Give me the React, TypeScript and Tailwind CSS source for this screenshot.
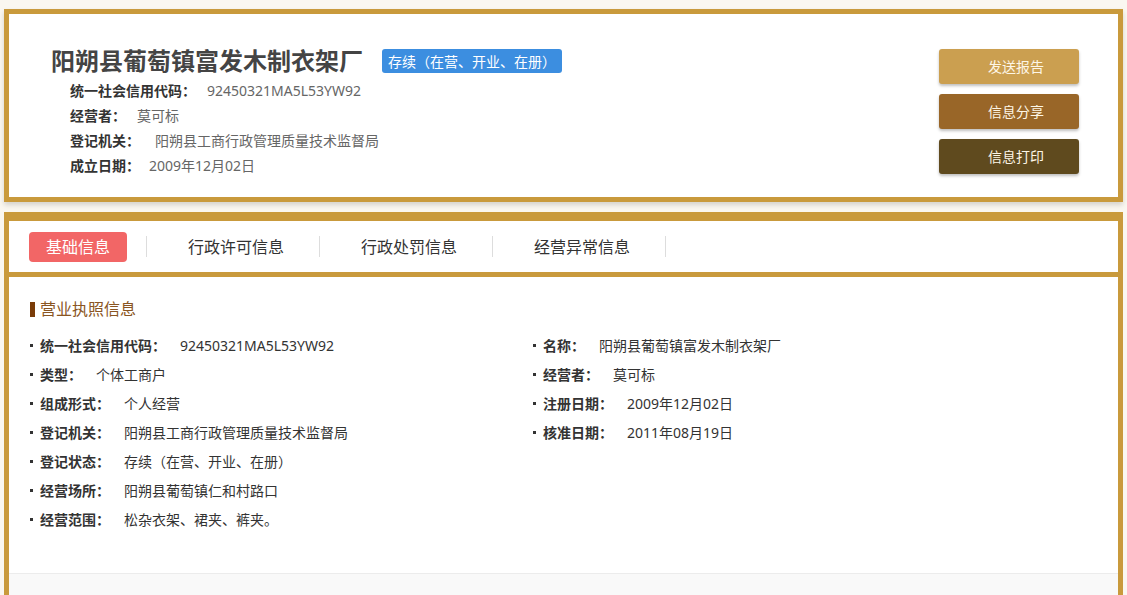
const font = { fontFamily: '"Noto Sans", "Noto Sans CJK SC", sans-serif' };

const headRows = [
  { label: "统一社会信用代码：", value: "92450321MA5L53YW92", gap: "ml-[11px]" },
  { label: "经营者：", value: "莫可标", gap: "ml-[11px]" },
  { label: "登记机关：", value: "阳朔县工商行政管理质量技术监督局", gap: "ml-[15px]" },
  { label: "成立日期：", value: "2009年12月02日", gap: "ml-[9px]" },
];

const leftFields = [
  ["统一社会信用代码：", "92450321MA5L53YW92"],
  ["类型：", "个体工商户"],
  ["组成形式：", "个人经营"],
  ["登记机关：", "阳朔县工商行政管理质量技术监督局"],
  ["登记状态：", "存续（在营、开业、在册）"],
  ["经营场所：", "阳朔县葡萄镇仁和村路口"],
  ["经营范围：", "松杂衣架、裙夹、裤夹。"],
];

const rightFields = [
  ["名称：", "阳朔县葡萄镇富发木制衣架厂"],
  ["经营者：", "莫可标"],
  ["注册日期：", "2009年12月02日"],
  ["核准日期：", "2011年08月19日"],
];

const Field = ({ label, value }: { label: string; value: string }) => (
  <div className="flex items-center h-[29px] text-[14px] text-[#333]">
    <span className="w-[3px] h-[3px] bg-[#333] mr-[7px]" />
    <span className="font-bold">{label}</span>
    <span className="ml-[14px]">{value}</span>
  </div>
);

const App = () => {
  return (
    <div className="min-h-screen bg-[#faf7f0] pt-[9px] px-[4px] overflow-hidden" style={font}>
      {/* top card */}
      <div className="h-[193px] bg-white border-[5px] border-[#c99a3c] shadow-[0_3px_5px_rgba(0,0,0,0.15)] flex justify-between">
        <div className="pl-[42px] pt-[33px]">
          <div className="flex items-center">
            <h1 className="text-[24px] leading-[28px] font-bold text-[#444]">阳朔县葡萄镇富发木制衣架厂</h1>
            <span className="ml-[19px] h-[24px] px-[6px] flex items-center rounded-[3px] bg-[#3c8ee0] text-white text-[14px]">
              存续（在营、开业、在册）
            </span>
          </div>
          <div className="ml-[19px] mt-[3px]">
            {headRows.map((r) => (
              <div key={r.label} className="flex items-center h-[25px] text-[14px]">
                <span className="font-bold text-[#333]">{r.label}</span>
                <span className={`${r.gap} text-[#666]`}>{r.value}</span>
              </div>
            ))}
          </div>
        </div>
        <div className="pr-[39px] pt-[35px] flex flex-col gap-[10px]">
          <button className="w-[140px] h-[35px] rounded-[3px] bg-[#cb9f50] text-[#fdf6e6] text-[14px] pl-[14px] shadow-[0_2px_3px_rgba(0,0,0,0.25)]">发送报告</button>
          <button className="w-[140px] h-[35px] rounded-[3px] bg-[#996628] text-[#fdf6e6] text-[14px] pl-[14px] shadow-[0_2px_3px_rgba(0,0,0,0.25)]">信息分享</button>
          <button className="w-[140px] h-[35px] rounded-[3px] bg-[#5f4a1e] text-[#fdf6e6] text-[14px] pl-[14px] shadow-[0_2px_3px_rgba(0,0,0,0.25)]">信息打印</button>
        </div>
      </div>

      {/* detail card */}
      <div className="mt-[10px] bg-white border-x-[5px] border-t-[9px] border-[#c99a3c]">
        <div className="h-[56px] border-b-[5px] border-[#c99a3c] flex items-center pl-[20px]">
          <span className="w-[98px] h-[30px] rounded-[4px] bg-[#f26666] text-white text-[16px] flex items-center justify-center">基础信息</span>
          <span className="ml-[19px] w-px h-[21px] bg-[#ddd]" />
          {["行政许可信息", "行政处罚信息", "经营异常信息"].map((t) => (
            <div key={t} className="flex items-center">
              <span className="ml-[41px] mr-[35px] text-[16px] text-[#333]">{t}</span>
              <span className="w-px h-[21px] bg-[#ddd]" />
            </div>
          ))}
        </div>
        <div className="h-[296px] pt-[22px] pl-[21px]">
          <div className="flex items-center h-[20px]">
            <span className="w-[5px] h-[15px] bg-[#7a3c08]" />
            <span className="ml-[5px] text-[16px] text-[#8a5522]">营业执照信息</span>
          </div>
          <div className="mt-[12px] grid grid-cols-[503px_1fr]">
            <div>
              {leftFields.map(([l, v]) => (
                <Field key={l} label={l} value={v} />
              ))}
            </div>
            <div>
              {rightFields.map(([l, v]) => (
                <Field key={l} label={l} value={v} />
              ))}
            </div>
          </div>
        </div>
        <div className="h-[40px] bg-[#f9f9f9] border-t border-[#ececec]" />
      </div>
    </div>
  );
};

export default App;
